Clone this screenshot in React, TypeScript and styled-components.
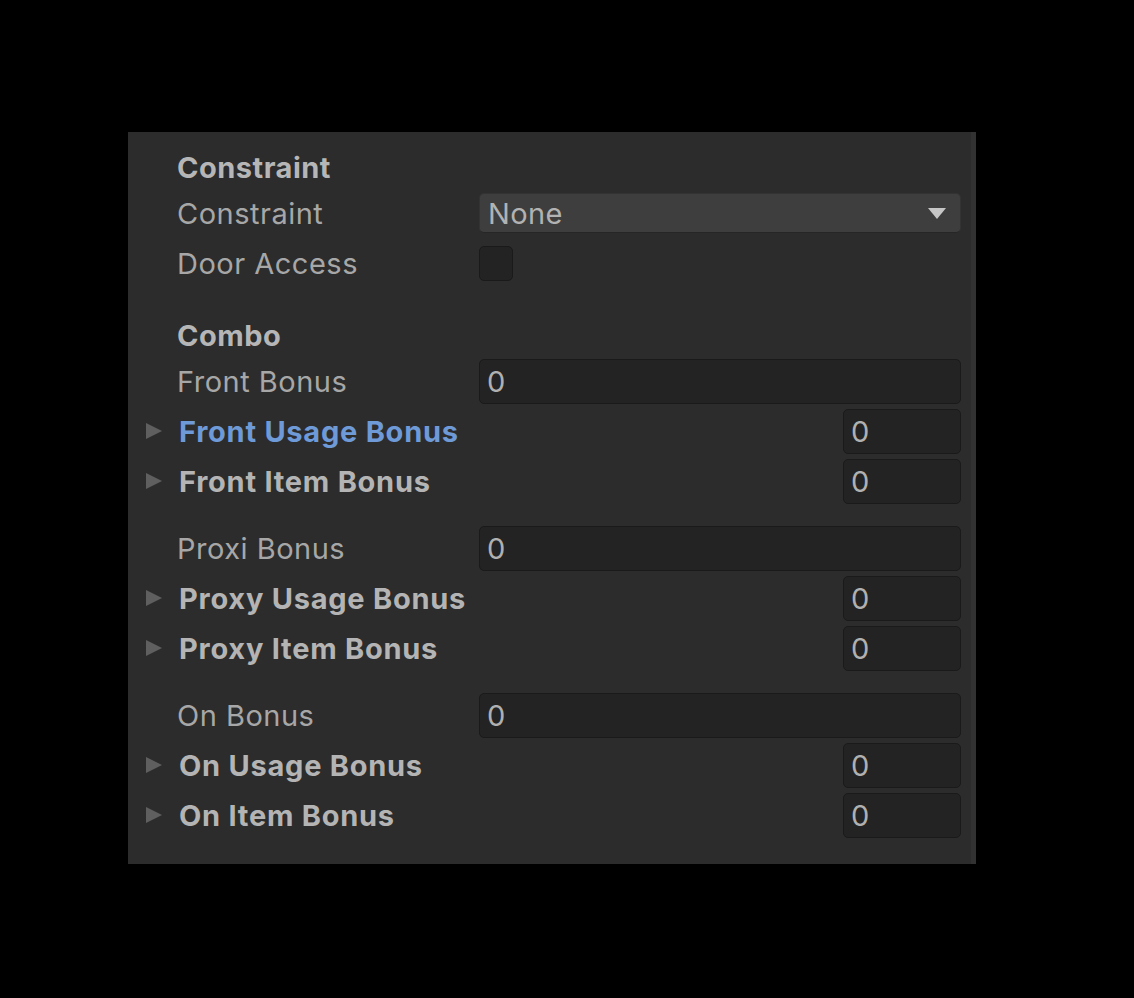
import React from "react";
import styled, { createGlobalStyle } from "styled-components";

const Global = createGlobalStyle`
  html, body { margin: 0; padding: 0; background: #000; }
  body { font-family: Inter, "Noto Sans", sans-serif; }
`;

const Page = styled.div`
  width: 1134px;
  height: 998px;
  background: #000;
  padding: 132px 0 0 128px;
  box-sizing: border-box;
`;

const Panel = styled.div`
  position: relative;
  width: 848px;
  height: 732px;
  background: #2c2c2c;
  box-sizing: border-box;
  padding: 14px 15px 24px 0;
  display: flex;
  flex-direction: column;
`;

const ScrollStrip = styled.div`
  position: absolute;
  top: 0;
  right: 0;
  width: 5px;
  height: 100%;
  background: #323232;
`;

const Header = styled.div`
  height: 42px;
  display: flex;
  align-items: center;
  padding-left: 49px;
  font-size: 29px;
  font-weight: 700;
  color: #b6b6b6;
  letter-spacing: 0.5px;
`;

const Row = styled.div`
  height: 50px;
  display: flex;
  align-items: center;
  flex-shrink: 0;
`;

const Spacer = styled.div<{ $h: number }>`
  height: ${(p) => p.$h}px;
  flex-shrink: 0;
`;

const LabelCell = styled.div`
  width: 351px;
  flex-shrink: 0;
  display: flex;
  align-items: center;
  padding-left: 49px;
  box-sizing: border-box;
  font-size: 29px;
  letter-spacing: 0.5px;
  color: #a7a7a7;
  white-space: nowrap;
`;

const FoldCell = styled.div`
  flex: 1;
  display: flex;
  align-items: center;
  padding-left: 18px;
  box-sizing: border-box;
  white-space: nowrap;
`;

const Arrow = styled.span`
  width: 0;
  height: 0;
  border-top: 8.5px solid transparent;
  border-bottom: 8.5px solid transparent;
  border-left: 16px solid #5f5f5f;
  margin-right: 17px;
`;

const FoldLabel = styled.span<{ $active?: boolean }>`
  font-size: 29px;
  font-weight: 700;
  letter-spacing: 0.75px;
  color: ${(p) => (p.$active ? "#6e9ad8" : "#b4b4b4")};
`;

const Field = styled.div<{ $w?: number }>`
  ${(p) => (p.$w ? `width: ${p.$w}px;` : "flex: 1;")}
  height: 45px;
  box-sizing: border-box;
  background: #232323;
  border: 1px solid #1a1a1a;
  border-radius: 5px;
  display: flex;
  align-items: center;
  padding-left: 7px;
  font-size: 29px;
  color: #b0b0b0;
`;

const Dropdown = styled.div`
  flex: 1;
  height: 40px;
  box-sizing: border-box;
  background: #3e3e3e;
  border: 1px solid #333;
  border-bottom-color: #262626;
  border-radius: 5px;
  display: flex;
  align-items: center;
  justify-content: space-between;
  padding: 0 14px 0 8px;
  font-size: 29px;
  letter-spacing: 0.4px;
  color: #b2b2b2;
`;

const DropArrow = styled.span`
  width: 0;
  height: 0;
  border-left: 9px solid transparent;
  border-right: 9px solid transparent;
  border-top: 11px solid #c6c6c6;
`;

const Checkbox = styled.div`
  width: 34px;
  height: 35px;
  box-sizing: border-box;
  background: #232323;
  border: 1px solid #1a1a1a;
  border-radius: 5px;
`;

const PlainRow = ({ label, value }: { label: string; value: string }) => (
  <Row>
    <LabelCell>{label}</LabelCell>
    <Field>{value}</Field>
  </Row>
);

const FoldRow = ({ label, active }: { label: string; active?: boolean }) => (
  <Row>
    <FoldCell>
      <Arrow />
      <FoldLabel $active={active}>{label}</FoldLabel>
    </FoldCell>
    <Field $w={118}>0</Field>
  </Row>
);

export default function App() {
  return (
    <>
      <Global />
      <Page>
        <Panel>
          <Header>Constraint</Header>
          <Row>
            <LabelCell>Constraint</LabelCell>
            <Dropdown>
              <span>None</span>
              <DropArrow />
            </Dropdown>
          </Row>
          <Row>
            <LabelCell>Door Access</LabelCell>
            <Checkbox />
          </Row>
          <Spacer $h={26} />
          <Header>Combo</Header>
          <PlainRow label="Front Bonus" value="0" />
          <FoldRow label="Front Usage Bonus" active />
          <FoldRow label="Front Item Bonus" />
          <Spacer $h={17} />
          <PlainRow label="Proxi Bonus" value="0" />
          <FoldRow label="Proxy Usage Bonus" />
          <FoldRow label="Proxy Item Bonus" />
          <Spacer $h={17} />
          <PlainRow label="On Bonus" value="0" />
          <FoldRow label="On Usage Bonus" />
          <FoldRow label="On Item Bonus" />
          <ScrollStrip />
        </Panel>
      </Page>
    </>
  );
}
